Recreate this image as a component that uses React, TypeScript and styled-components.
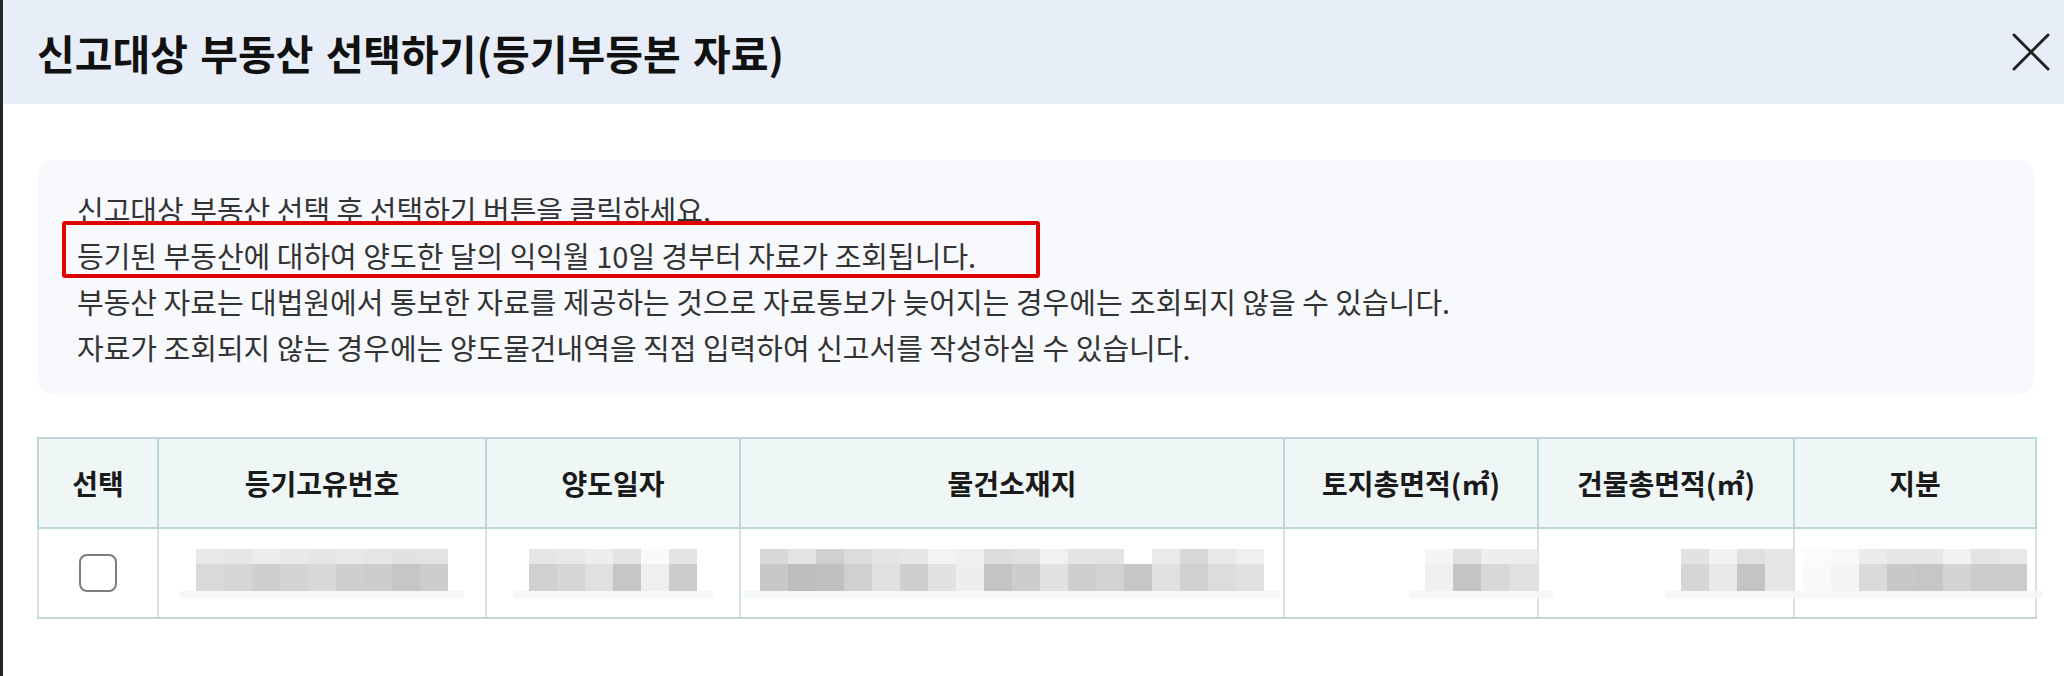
import React from 'react';
import styled, { createGlobalStyle } from 'styled-components';

const GlobalStyle = createGlobalStyle`
  html, body {
    margin: 0;
    padding: 0;
    background: #fff;
  }
  body {
    font-family: "Noto Sans CJK KR", "Noto Sans", sans-serif;
  }
`;

interface Column {
  title: string;
  width: number;
}

interface MosaicData {
  top: string[];
  bottom: string[];
  align: 'center' | 'end';
}

const columns: Column[] = [
  { title: '선택', width: 120 },
  { title: '등기고유번호', width: 328 },
  { title: '양도일자', width: 254 },
  { title: '물건소재지', width: 544 },
  { title: '토지총면적(㎡)', width: 254 },
  { title: '건물총면적(㎡)', width: 256 },
  { title: '지분', width: 242 },
];

const notices = [
  '신고대상 부동산 선택 후 선택하기 버튼을 클릭하세요.',
  '등기된 부동산에 대하여 양도한 달의 익익월 10일 경부터 자료가 조회됩니다.',
  '부동산 자료는 대법원에서 통보한 자료를 제공하는 것으로 자료통보가 늦어지는 경우에는 조회되지 않을 수 있습니다.',
  '자료가 조회되지 않는 경우에는 양도물건내역을 직접 입력하여 신고서를 작성하실 수 있습니다.',
];

// redacted (pixelated) cell values
const hidden: MosaicData[] = [
  {
    align: 'center',
    top: ['#e8e8e8', '#e6e6e6', '#ececec', '#e9e9e9', '#e6e6e6', '#e8e8e8', '#e5e5e5', '#e2e2e2', '#e3e3e3'],
    bottom: ['#d9d9d9', '#d6d6d6', '#cfcfcf', '#d3d3d3', '#d8d8d8', '#cfcfcf', '#cdcdcd', '#c6c6c6', '#cdcdcd'],
  },
  {
    align: 'center',
    top: ['#e6e6e6', '#e8e8e8', '#eeeeee', '#e3e3e3', '#fafafa', '#e4e4e4'],
    bottom: ['#d0d0d0', '#d6d6d6', '#e0e0e0', '#c6c6c6', '#efefef', '#cbcbcb'],
  },
  {
    align: 'center',
    top: ['#d8d8d8', '#e3e3e3', '#d0d0d0', '#dcdcdc', '#e4e4e4', '#e6e6e6', '#f3f3f3', '#efefef', '#dcdcdc', '#e0e0e0', '#f1f1f1', '#e4e4e4', '#e3e3e3', '#ffffff', '#eaeaea', '#d8d8d8', '#e8e8e8', '#efefef'],
    bottom: ['#c8c8c8', '#bdbdbd', '#c0c0c0', '#d0d0d0', '#e0e0e0', '#cfcfcf', '#e2e2e2', '#eeeeee', '#c4c4c4', '#cdcdcd', '#e2e2e2', '#cfcfcf', '#d2d2d2', '#c6c6c6', '#e0e0e0', '#d0d0d0', '#dcdcdc', '#e0e0e0'],
  },
  {
    align: 'end',
    top: ['#f5f5f5', '#e0e0e0', '#eeeeee', '#eeeeee'],
    bottom: ['#f0f0f0', '#c4c4c4', '#d8d8d8', '#e0e0e0'],
  },
  {
    align: 'end',
    top: ['#e2e2e2', '#f2f2f2', '#e0e0e0', '#e6e6e6'],
    bottom: ['#d6d6d6', '#e8e8e8', '#c4c4c4', '#e6e6e6'],
  },
  {
    align: 'center',
    top: ['#fbfbfb', '#f8f8f8', '#ebebeb', '#e6e6e6', '#e6e6e6', '#f2f2f2', '#e4e4e4', '#e8e8e8'],
    bottom: ['#fafafa', '#f5f5f5', '#dadada', '#c8c8c8', '#c6c6c6', '#d4d4d4', '#cbcbcb', '#cbcbcb'],
  },
];

const Mosaic = ({ top, bottom, align }: MosaicData) => (
  <MosaicWrap $align={align}>
    <MosaicBlocks>
      <MosaicRow>
        {top.map((tone, i) => (
          <Block key={i} $tone={tone} $h={15} />
        ))}
      </MosaicRow>
      <MosaicRow>
        {bottom.map((tone, i) => (
          <Block key={i} $tone={tone} $h={28} />
        ))}
      </MosaicRow>
      <Haze />
    </MosaicBlocks>
  </MosaicWrap>
);

const CloseIcon = () => (
  <svg width="38" height="38" viewBox="0 0 38 38" fill="none">
    <path d="M2 2L36 36M36 2L2 36" stroke="#222" strokeWidth="3" strokeLinecap="round" />
  </svg>
);

export default function App() {
  return (
    <>
      <GlobalStyle />
      <Modal>
        <Header>
          <Title>신고대상 부동산 선택하기(등기부등본 자료)</Title>
          <CloseButton aria-label="닫기">
            <CloseIcon />
          </CloseButton>
        </Header>
        <Body>
          <Notice>
            {notices.map((line) => (
              <NoticeLine key={line}>{line}</NoticeLine>
            ))}
            <Callout />
          </Notice>
          <Table>
            <colgroup>
              {columns.map((c) => (
                <col key={c.title} style={{ width: c.width }} />
              ))}
            </colgroup>
            <thead>
              <tr>
                {columns.map((c) => (
                  <HeadCell key={c.title}>{c.title}</HeadCell>
                ))}
              </tr>
            </thead>
            <tbody>
              <tr>
                <Cell>
                  <Checkbox />
                </Cell>
                {hidden.map((m, i) => (
                  <Cell key={i}>
                    <Mosaic {...m} />
                  </Cell>
                ))}
              </tr>
            </tbody>
          </Table>
        </Body>
      </Modal>
    </>
  );
}

const Modal = styled.div`
  min-height: 676px;
  box-sizing: border-box;
  border-left: 3px solid #262626;
  background: #fff;
`;

const Header = styled.header`
  height: 104px;
  display: flex;
  align-items: center;
  justify-content: space-between;
  padding: 0 12px 0 34px;
  background: #e7eef7;
`;

const Title = styled.h1`
  margin: 0;
  font-size: 41px;
  font-weight: 700;
  color: #111;
  word-spacing: 3px;
`;

const CloseButton = styled.button`
  width: 42px;
  height: 42px;
  display: flex;
  align-items: center;
  justify-content: center;
  padding: 0;
  border: 0;
  background: none;
  cursor: pointer;
`;

const Body = styled.div`
  padding: 56px 29px 0 34px;
`;

const Notice = styled.div`
  position: relative;
  height: 235px;
  box-sizing: border-box;
  display: flex;
  flex-direction: column;
  justify-content: center;
  padding: 0 40px;
  border-radius: 18px;
  background: #f7f9fd;
`;

const NoticeLine = styled.p`
  margin: 0;
  font-size: 29px;
  line-height: 46px;
  color: #333;
`;

const Callout = styled.div`
  position: absolute;
  left: 25px;
  top: 61px;
  width: 978px;
  height: 57px;
  box-sizing: border-box;
  border: 4px solid #e10000;
  border-radius: 3px;
`;

const Table = styled.table`
  width: 100%;
  margin-top: 42px;
  table-layout: fixed;
  border-collapse: collapse;
  border: 2px solid #bdd7d8;
`;

const HeadCell = styled.th`
  height: 88px;
  padding: 0;
  border: 2px solid #bdd7d8;
  background: #eef6f6;
  font-size: 28px;
  font-weight: 700;
  color: #1a1a1a;
  text-align: center;
`;

const Cell = styled.td`
  height: 88px;
  padding: 0;
  border: 2px solid #d6e6e7;
  border-bottom-color: #bdd7d8;
  text-align: center;
  vertical-align: middle;
`;

const Checkbox = styled.span`
  display: inline-block;
  width: 38px;
  height: 38px;
  box-sizing: border-box;
  vertical-align: middle;
  border: 2px solid #7d7d7d;
  border-radius: 8px;
  background: #fff;
`;

const MosaicWrap = styled.div<{ $align: 'center' | 'end' }>`
  display: flex;
  justify-content: ${({ $align }) => ($align === 'end' ? 'flex-end' : 'center')};
`;

const MosaicBlocks = styled.div`
  position: relative;
  display: flex;
  flex-direction: column;
  padding-bottom: 6px;
`;

const MosaicRow = styled.div`
  display: flex;
`;

const Block = styled.span<{ $tone: string; $h: number }>`
  width: 28px;
  height: ${({ $h }) => $h}px;
  background: ${({ $tone }) => $tone};
`;

const Haze = styled.span`
  position: absolute;
  left: -16px;
  right: -16px;
  bottom: 0;
  height: 7px;
  background: #f6f7f8;
`;
